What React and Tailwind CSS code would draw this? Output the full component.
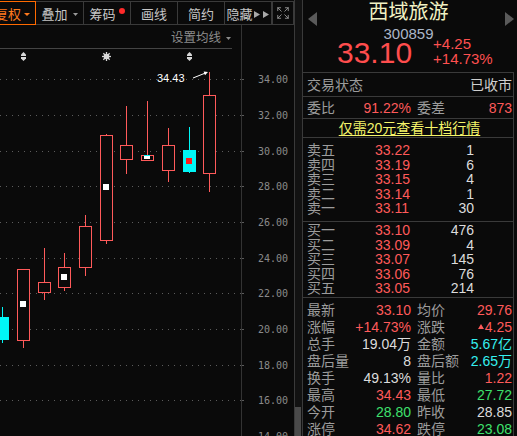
import React from 'react';
import { Expand } from 'lucide-react';

const RED = '#ff5a5a';
const CYANC = '#00f6f6';

function Caret({ color, w = 7, h = 4 }) {
  return (
    <svg width={w} height={h} viewBox="0 0 7 4" preserveAspectRatio="none" className="shrink-0">
      <path d="M0 0H7L3.5 4Z" fill={color} />
    </svg>
  );
}

const gridYs = [79, 115, 151, 186, 222, 258, 293, 329, 365, 400];
const axis = [
  [34, 79], [32, 115], [30, 151], [28, 186], [26, 222], [24, 258],
  [22, 293], [20, 329], [18, 365], [16, 400], [14, 436],
];

const candles = [
  { x: -4, w: 13, top: 317, bot: 339, wt: 307, wb: 342, kind: 'cyan' },
  { x: 17, w: 13, top: 269, bot: 340, wt: 269, wb: 347, sq: [20, 301] },
  { x: 38, w: 13, top: 282, bot: 292, wt: 248, wb: 299 },
  { x: 58, w: 13, top: 267, bot: 287, wt: 253, wb: 290, sq: [61, 274] },
  { x: 79, w: 13, top: 226, bot: 267, wt: 215, wb: 275 },
  { x: 100, w: 13, top: 135, bot: 240, wt: 134, wb: 243, sq: [103, 184] },
  { x: 120, w: 13, top: 145, bot: 159, wt: 106, wb: 173 },
  { x: 141, w: 13, top: 155, bot: 160, wt: 101, wb: 160, kind: 'doji' },
  { x: 162, w: 13, top: 145, bot: 170, wt: 128, wb: 181 },
  { x: 183, w: 13, top: 150, bot: 171, wt: 127, wb: 172, kind: 'cyan', rsq: [186, 158] },
  { x: 203, w: 13, top: 95, bot: 173, wt: 72, wb: 191 },
];

function Candle({ c }) {
  const cx = c.x + 6.5;
  if (c.kind === 'cyan') {
    return (
      <g>
        <line x1={cx} x2={cx} y1={c.wt} y2={c.wb + 1} stroke={CYANC} />
        <rect x={c.x} y={c.top} width={c.w} height={c.bot - c.top + 1} fill={CYANC} />
        {c.rsq && <rect x={c.rsq[0]} y={c.rsq[1]} width="6" height="6" fill="#ff1a1a" />}
      </g>
    );
  }
  return (
    <g>
      {c.wt < c.top && <line x1={cx} x2={cx} y1={c.wt} y2={c.top} stroke={RED} />}
      {c.wb > c.bot && <line x1={cx} x2={cx} y1={c.bot} y2={c.wb + 1} stroke={RED} />}
      <rect x={c.x + 0.5} y={c.top + 0.5} width={c.w - 1} height={c.bot - c.top} fill="#0a0a0a" stroke={RED} />
      {c.sq && <rect x={c.sq[0]} y={c.sq[1]} width="6" height="6" fill="#ffffff" />}
      {c.kind === 'doji' && (
        <g>
          <rect x="144" y="156" width="6" height="3" fill="#ffffff" />
          <line x1="144" x2="150" y1="155.5" y2="155.5" stroke={CYANC} />
        </g>
      )}
    </g>
  );
}

function Pin({ cx }) {
  return (
    <g>
      <path
        d={`M${cx} 52 L${cx + 2.5} 54.5 L${cx + 2.5} 58.5 L${cx} 61 L${cx - 2.5} 58.5 L${cx - 2.5} 54.5Z`}
        fill="#d8d8d8"
      />
      <line x1={cx - 3} x2={cx + 3} y1="56.5" y2="56.5" stroke="#0a0a0a" />
    </g>
  );
}

function Star({ cx, cy }) {
  const spokes = [0, 45, 90, 135];
  return (
    <g stroke="#d8d8d8" strokeWidth="1.3">
      {spokes.map((a) => {
        const r = (a * Math.PI) / 180;
        const dx = Math.cos(r) * 4.5;
        const dy = Math.sin(r) * 4.5;
        return <line key={a} x1={cx - dx} y1={cy - dy} x2={cx + dx} y2={cy + dy} />;
      })}
      <circle cx={cx} cy={cy} r="2.8" fill="#d8d8d8" stroke="none" />
    </g>
  );
}

function Plot() {
  return (
    <svg width="241" height="387" className="block shrink-0">
      <g transform="translate(0,-49)">
        {gridYs.map((y) => (
          <line key={y} x1="0" x2="241" y1={y + 0.5} y2={y + 0.5} stroke="#5c5c5c" strokeDasharray="1 5" />
        ))}
        <Pin cx={23.5} />
        <Star cx={106.5} cy={56.5} />
        <Pin cx={189.5} />
        {candles.map((c, i) => (
          <Candle key={i} c={c} />
        ))}
        <text x="157" y="82" fontSize="11" fontFamily="Liberation Sans" fill="#ffffff">34.43</text>
        <line x1="193" y1="78" x2="205" y2="73.2" stroke="#ffffff" />
        <path d="M208 72 L203.6 71.6 L205 75.3Z" fill="#ffffff" />
      </g>
    </svg>
  );
}

function Axis() {
  return (
    <svg width="52" height="411" className="block shrink-0">
      <g transform="translate(0,-25)">
        {axis.map(([p, y]) => (
          <g key={p}>
            <line x1="0" x2="2" y1={y + 0.5} y2={y + 0.5} stroke="#5c5c5c" />
            <text x="16" y={y + 4} fontSize="10" fontFamily="DejaVu Sans Mono" fill="#8a8a8a">
              {p.toFixed(2)}
            </text>
          </g>
        ))}
      </g>
    </svg>
  );
}

function Toolbar() {
  return (
    <div className="h-[25px] pt-[1px] flex overflow-hidden shrink-0">
      <div className="-ml-[11px] w-[47px] h-[24px] pt-[3px] flex items-center justify-center gap-[3px] shrink-0 text-[13px] leading-none border border-[#ff6a00] text-[#ff7a1e]">
        复权<Caret color="#ff7a1e" w={6} h={3} />
      </div>
      <div className="w-[48px] h-[24px] pt-[3px] flex items-center justify-center gap-[5px] shrink-0 text-[13px] leading-none border-y border-r border-[#3a3a3a] text-[#c6c6c6]">
        叠加<Caret color="#9a9a9a" w={5} h={3} />
      </div>
      <div className="w-[47px] h-[24px] pt-[3px] flex items-center justify-center shrink-0 text-[13px] leading-none border-y border-r border-[#3a3a3a] text-[#c6c6c6]">
        筹码<span className="w-[6px] h-[6px] rounded-full bg-[#ff2a2a] ml-[3px] mb-[7px]" />
      </div>
      <div className="w-[47px] h-[24px] pt-[3px] flex items-center justify-center shrink-0 text-[13px] leading-none border-y border-r border-[#3a3a3a] text-[#c6c6c6]">
        画线
      </div>
      <div className="w-[47px] h-[24px] pt-[3px] flex items-center justify-center shrink-0 text-[13px] leading-none border-y border-r border-[#3a3a3a] text-[#c6c6c6]">
        简约
      </div>
      <div className="w-[47px] h-[24px] pt-[3px] flex items-center justify-center gap-[1px] shrink-0 text-[13px] leading-none border-y border-r border-[#3a3a3a] text-[#c6c6c6]">
        隐藏
        <svg width="16" height="7" viewBox="0 0 16 7" className="shrink-0">
          <path d="M0 0L6 3.5L0 7Z M9 0L15 3.5L9 7Z" fill="#a8a8a8" />
        </svg>
      </div>
      <div className="w-[22px] h-[24px] flex items-center justify-center shrink-0 border border-[#3a3a3a]">
        <Expand size={14} strokeWidth={1.5} color="#9a9a9a" />
      </div>
    </div>
  );
}

const LABEL = 'text-[#9c9c9c]';
const colorClass = {
  r: 'text-[#ff5a5a]',
  g: 'text-[#3fe06d]',
  c: 'text-[#35f0f0]',
  w: 'text-[#dcdcdc]',
};

const sells = [
  ['卖五', '33.22', '1'],
  ['卖四', '33.19', '6'],
  ['卖三', '33.15', '4'],
  ['卖二', '33.14', '1'],
  ['卖一', '33.11', '30'],
];
const buys = [
  ['买一', '33.10', '476'],
  ['买二', '33.09', '4'],
  ['买三', '33.07', '145'],
  ['买四', '33.06', '76'],
  ['买五', '33.05', '214'],
];

const stats = [
  ['最新', '33.10', 'r', '均价', '29.76', 'r'],
  ['涨幅', '+14.73%', 'r', '涨跌', 'UP4.25', 'r'],
  ['总手', '19.04万', 'w', '金额', '5.67亿', 'c'],
  ['盘后量', '8', 'w', '盘后额', '2.65万', 'c'],
  ['换手', '49.13%', 'w', '量比', '1.22', 'r'],
  ['最高', '34.43', 'r', '最低', '27.72', 'g'],
  ['今开', '28.80', 'g', '昨收', '28.85', 'w'],
  ['涨停', '34.62', 'r', '跌停', '23.08', 'g'],
];

function Val({ v, c }) {
  if (v.startsWith('UP')) {
    return (
      <span className={`flex items-center gap-[1px] ${colorClass[c]}`}>
        <svg width="6" height="5" viewBox="0 0 6 5" className="shrink-0">
          <path d="M3 0L6 5H0Z" fill="#ff5a5a" />
        </svg>
        {v.slice(2)}
      </span>
    );
  }
  return <span className={colorClass[c]}>{v}</span>;
}

function BookRow({ r }) {
  return (
    <div className="h-[14.5px] flex items-center pl-[4px] text-[14px] leading-none">
      <span className="w-[68px] shrink-0 text-[#9c9c9c]">{r[0]}</span>
      <span className="w-[60px] shrink-0 text-[#ff5a5a]">{r[1]}</span>
      <span className="w-[39px] shrink-0 text-right text-[#dcdcdc]">{r[2]}</span>
    </div>
  );
}

function RightPanel() {
  return (
    <div className="w-[215px] shrink-0 border-l border-[#3a3a3a] flex flex-col">
      <div className="w-[211px] flex-1 flex flex-col">
        <div className="h-[72px] shrink-0 flex">
          <div className="w-[16px] shrink-0 pl-[5px] pt-[12px]">
            <svg width="9" height="14" viewBox="0 0 9 14">
              <path d="M9 0L0 7L9 14Z" fill="#5a5a5a" />
            </svg>
          </div>
          <div className="flex-1 flex flex-col">
            <div className="h-[24px] text-center text-[20px] leading-[24px] text-[#f2f2c4]">西域旅游</div>
            <div className="h-[13px] mt-[3px] text-center text-[15px] leading-[13px] text-[#aab6c8]">300859</div>
            <div className="-mt-[3px] flex pl-[18px]">
              <div className="mt-[3px] text-[30px] leading-[25px] text-[#ff4d4d]">33.10</div>
              <div className="ml-[21px] flex flex-col gap-[1px] text-[15px] leading-[14px] text-[#ff5050]">
                <div>+4.25</div>
                <div>+14.73%</div>
              </div>
            </div>
          </div>
          <div className="w-[16px] shrink-0 flex justify-end pt-[12px]">
            <svg width="9" height="14" viewBox="0 0 9 14">
              <path d="M0 0L9 7L0 14Z" fill="#5a5a5a" />
            </svg>
          </div>
        </div>

        <div className="flex-1 border-t border-r border-[#3a3a3a] flex flex-col">
          <div className="h-[24px] shrink-0 border-b border-[#3a3a3a] flex items-center justify-between pl-[4px] pr-[1px] text-[14px] leading-none">
            <span className={LABEL}>交易状态</span>
            <span className="text-[#cfcfcf]">已收市</span>
          </div>
          <div className="h-[22px] shrink-0 border-b border-[#3a3a3a] flex items-center pl-[4px] pr-[1px] text-[14px] leading-none">
            <div className="w-[104px] shrink-0 flex justify-between">
              <span className={LABEL}>委比</span>
              <span className="text-[#ff5a5a]">91.22%</span>
            </div>
            <div className="ml-[6px] flex-1 flex justify-between">
              <span className={LABEL}>委差</span>
              <span className="text-[#ff5a5a]">873</span>
            </div>
          </div>
          <div className="h-[19px] shrink-0 border-b border-[#3a3a3a] flex items-center justify-center pl-[3px] text-[14px] leading-none">
            <span className="text-[#f5f56a] underline underline-offset-[2px]">仅需20元查看十档行情</span>
          </div>
          <div className="h-[84px] shrink-0 border-b border-[#3a3a3a] pt-[5px] flex flex-col">
            {sells.map((r) => (
              <BookRow key={r[0]} r={r} />
            ))}
          </div>
          <div className="h-[76px] shrink-0 border-b border-[#3a3a3a] pt-[1px] flex flex-col">
            {buys.map((r) => (
              <BookRow key={r[0]} r={r} />
            ))}
          </div>
          <div className="pt-[3px] flex flex-col">
            {stats.map((s) => (
              <div key={s[0]} className="h-[17px] shrink-0 flex items-center pl-[4px] pr-[1px] text-[14px] leading-none">
                <div className="w-[104px] shrink-0 flex justify-between">
                  <span className={LABEL}>{s[0]}</span>
                  <Val v={s[1]} c={s[2]} />
                </div>
                <div className="ml-[6px] flex-1 flex justify-between">
                  <span className={LABEL}>{s[3]}</span>
                  <Val v={s[4]} c={s[5]} />
                </div>
              </div>
            ))}
          </div>
        </div>
      </div>
    </div>
  );
}

export default function App() {
  return (
    <div className="w-[517px] h-[436px] bg-[#0a0a0a] flex overflow-hidden font-['Liberation_Sans','Noto_Sans_CJK_SC',sans-serif]">
      <div className="w-[295px] shrink-0 flex flex-col border-r border-[#3a3a3a]">
        <Toolbar />
        <div className="flex-1 flex overflow-hidden">
          <div className="w-[242px] shrink-0 border-r border-[#333333] flex flex-col">
            <div className="h-[24px] w-[232px] shrink-0 pt-[3px] pr-[1px] border-b border-[#444444] flex items-center justify-end gap-[5px] text-[12.5px] leading-none text-[#8c8c8c]">
              设置均线<Caret color="#8c8c8c" w={5} h={3} />
            </div>
            <Plot />
          </div>
          <Axis />
        </div>
      </div>
      <div className="w-[7px] shrink-0 bg-[#121212] flex flex-col justify-end">
        <div className="h-[29px] w-[6px] bg-[#4a4a4a]" />
      </div>
      <RightPanel />
    </div>
  );
}
